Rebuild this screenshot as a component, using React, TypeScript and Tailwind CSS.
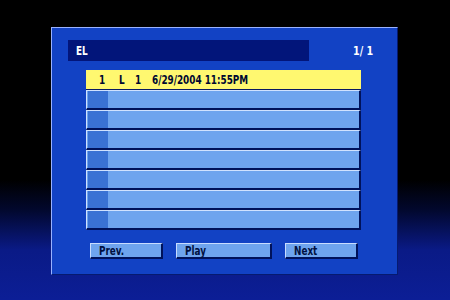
const rows = Array.from({ length: 7 }, (_, i) => i)

const font = { fontFamily: '"DejaVu Sans Condensed", "DejaVu Sans", sans-serif' }

// the TV OSD font is tall and narrow: squeeze DejaVu horizontally
function Txt({ children, className = '' }: { children: string; className?: string }) {
  return (
    <span className={`inline-block origin-left scale-x-[0.82] whitespace-pre ${className}`}>
      {children}
    </span>
  )
}

function Button({ label, w }: { label: string; w: string }) {
  return (
    <div
      className={`${w} h-[16px] flex items-center pl-[8px] bg-[#6ea4ee] border-t border-l border-[#c8dcff] border-b-2 border-r-2 border-b-[#00125a] border-r-[#00125a] text-[12px] font-bold text-[#001040] leading-none`}
    >
      <Txt>{label}</Txt>
    </div>
  )
}

export default function App() {
  return (
    <div
      className="w-[450px] h-[300px] overflow-hidden bg-[linear-gradient(to_bottom,#000000_0px,#000000_180px,#02082e_210px,#0a1a86_250px,#0c1e96_300px)]"
      style={font}
    >
      <div className="pt-[27px] pl-[51px]">
        <div className="w-[347px] h-[248px] bg-[#1242c4] border-t border-l border-[#9ab2ff] border-b border-r border-b-[#061a70] border-r-[#061a70] flex flex-col">
          {/* header */}
          <div className="flex items-center mt-[12px] ml-[16px]">
            <div className="w-[241px] h-[21px] bg-[#02157a] flex items-center pl-[8px] text-white text-[12px] font-bold">
              <Txt>EL</Txt>
            </div>
            <div className="ml-[44px] text-white text-[13px] font-bold">
              <Txt>1/ 1</Txt>
            </div>
          </div>

          {/* list */}
          <div className="ml-[34px] mt-[9px] w-[275px] flex flex-col">
            <div className="h-[20px] bg-[#fff870] border-b border-[#0a1a60] flex items-center text-[12px] font-bold text-[#000830] leading-none">
              <span className="ml-[13px]">
                <Txt>1</Txt>
              </span>
              <span className="ml-[12px]">
                <Txt>L</Txt>
              </span>
              <span className="ml-[10px]">
                <Txt>1</Txt>
              </span>
              <span className="ml-[9px]">
                <Txt>6/29/2004 11:55PM</Txt>
              </span>
            </div>
            {rows.map((r) => (
              <div
                key={r}
                className="h-[20px] bg-[#6ea4ee] border-t border-l border-[#d0e2ff] border-b-2 border-r-2 border-b-[#00125a] border-r-[#00125a] flex"
              >
                <div className="ml-[1px] w-[20px] h-full bg-[#3a72d4]" />
              </div>
            ))}
          </div>

          {/* buttons */}
          <div className="flex ml-[38px] mt-[13px]">
            <Button label="Prev." w="w-[73px]" />
            <div className="ml-[13px]">
              <Button label="Play" w="w-[96px]" />
            </div>
            <div className="ml-[13px]">
              <Button label="Next" w="w-[73px]" />
            </div>
          </div>
        </div>
      </div>
    </div>
  )
}
